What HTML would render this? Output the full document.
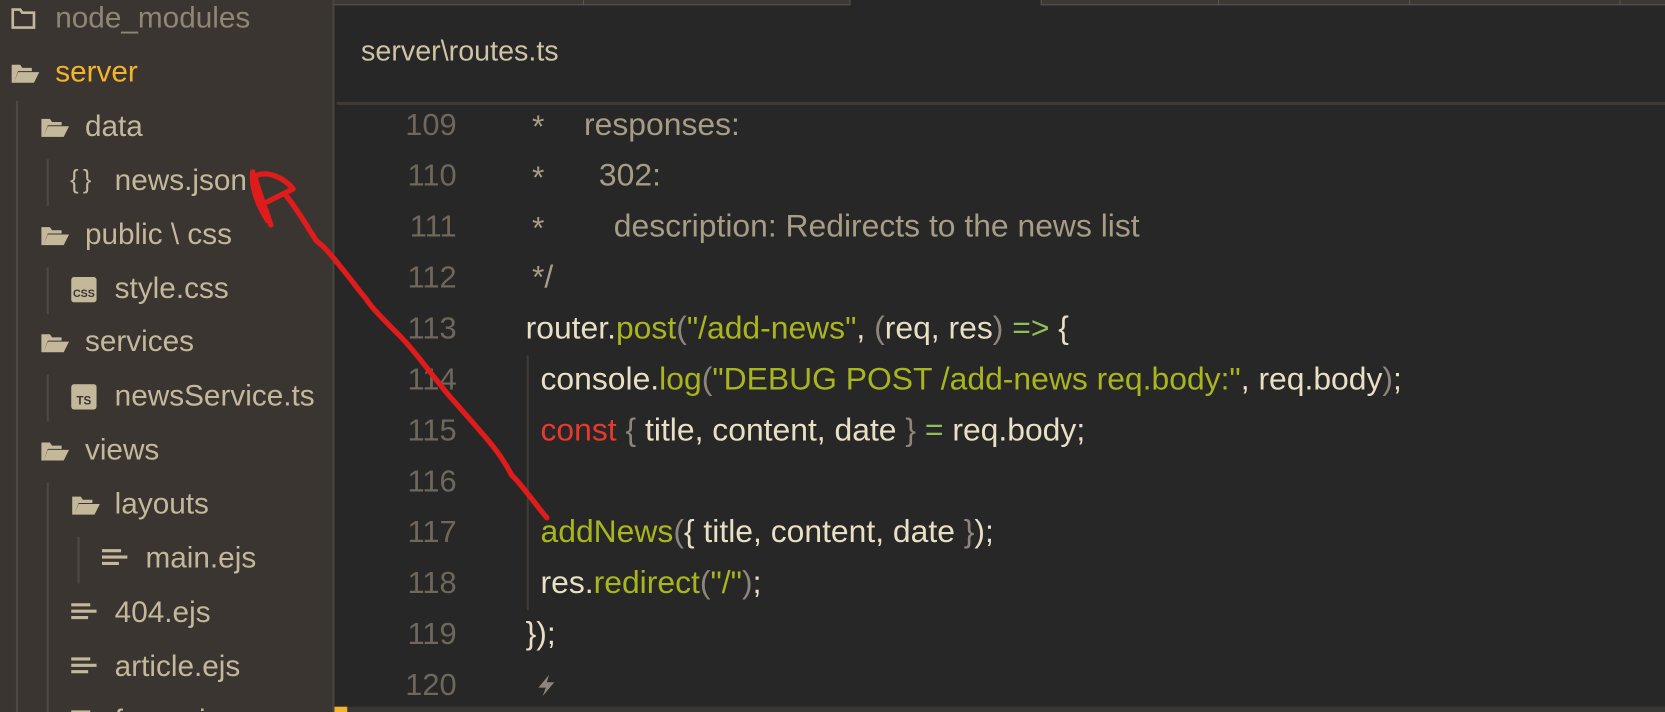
<!DOCTYPE html>
<html><head><meta charset="utf-8"><style>
*{margin:0;padding:0;box-sizing:border-box}
body{width:1665px;height:712px;overflow:hidden;background:#272727;font-family:"Liberation Sans",sans-serif}
#w{position:absolute;left:0;top:0;width:1568px;height:671px;overflow:hidden;transform:scale(1.0619,1.0611);transform-origin:0 0;background:#272727}
#side{position:absolute;left:0;top:0;width:315px;height:671px;background:#3a3531;border-right:2px solid #4a443e}
.r{position:absolute;font-size:28px;color:#c4b89b;white-space:nowrap;line-height:30px}
.ic{position:absolute}
.g{position:absolute;width:2px;background:#4e4842}
#tabs{position:absolute;left:315px;top:0;width:1253px;height:5px;background:#3d3834;border-bottom:1px solid #5a534b}
.ts{position:absolute;top:0;width:1px;height:5px;background:#5a534b}
#hdr{position:absolute;left:340px;top:33px;font-size:27px;color:#cfc3a6}
#hl{position:absolute;left:317px;top:96px;width:1251px;height:3px;background:#3e3934}
.ln{position:absolute;left:330px;width:100px;text-align:right;font-size:29px;color:#6f675c;line-height:32px}
.c{position:absolute;font-size:30px;color:#e9dfc2;white-space:nowrap;line-height:32px}
.y{color:#a9b51e}.p{color:#8d857b}.k{color:#e8392c}.m{color:#a79c84}.o{color:#8fbf5a}
</style></head><body><div id="w">
<div id="side">
<div class="g" style="left:15px;top:95px;height:576px"></div>
<div class="g" style="left:44px;top:150px;height:44px"></div>
<div class="g" style="left:44px;top:252px;height:44px"></div>
<div class="g" style="left:44px;top:353px;height:44px"></div>
<div class="g" style="left:44px;top:455px;height:216px"></div>
<div class="g" style="left:73px;top:506px;height:44px"></div>
<svg class="ic" style="left:10px;top:6px" width="24" height="22"><path d="M2 3h7l2 3h11v14H2z" fill="none" stroke="#c4b89b" stroke-width="2.5"/></svg>
<div class="r" style="left:52px;top:2px;color:#8f8676">node_modules</div>
<svg class="ic" style="left:10px;top:57px" width="28" height="24"><path d="M1 4h8l2 3h9v3H7L3 21H1z M7 11h20l-5 10H3z" fill="#c4b89b"/></svg>
<div class="r" style="left:52px;top:53px;color:#f2b42a">server</div>
<svg class="ic" style="left:38px;top:108px" width="28" height="24"><path d="M1 4h8l2 3h9v3H7L3 21H1z M7 11h20l-5 10H3z" fill="#c4b89b"/></svg>
<div class="r" style="left:80px;top:104px">data</div>
<div class="r" style="left:66px;top:155px;font-size:24px;letter-spacing:4px">{}</div>
<div class="r" style="left:108px;top:155px">news.json</div>
<svg class="ic" style="left:38px;top:210px" width="28" height="24"><path d="M1 4h8l2 3h9v3H7L3 21H1z M7 11h20l-5 10H3z" fill="#c4b89b"/></svg>
<div class="r" style="left:80px;top:206px">public \ css</div>
<svg class="ic" style="left:67px;top:261px" width="24" height="24"><rect x="0" y="0" width="24" height="24" rx="3" fill="#c4b89b"/><text x="12" y="19" font-size="10" font-weight="bold" text-anchor="middle" fill="#3a3531" font-family="Liberation Sans">CSS</text></svg>
<div class="r" style="left:108px;top:257px">style.css</div>
<svg class="ic" style="left:38px;top:311px" width="28" height="24"><path d="M1 4h8l2 3h9v3H7L3 21H1z M7 11h20l-5 10H3z" fill="#c4b89b"/></svg>
<div class="r" style="left:80px;top:307px">services</div>
<svg class="ic" style="left:67px;top:362px" width="24" height="24"><rect x="0" y="0" width="24" height="24" rx="3" fill="#c4b89b"/><text x="12" y="19" font-size="11" font-weight="bold" text-anchor="middle" fill="#3a3531" font-family="Liberation Sans">TS</text></svg>
<div class="r" style="left:108px;top:358px">newsService.ts</div>
<svg class="ic" style="left:38px;top:413px" width="28" height="24"><path d="M1 4h8l2 3h9v3H7L3 21H1z M7 11h20l-5 10H3z" fill="#c4b89b"/></svg>
<div class="r" style="left:80px;top:409px">views</div>
<svg class="ic" style="left:67px;top:464px" width="28" height="24"><path d="M1 4h8l2 3h9v3H7L3 21H1z M7 11h20l-5 10H3z" fill="#c4b89b"/></svg>
<div class="r" style="left:108px;top:460px">layouts</div>
<svg class="ic" style="left:96px;top:517px" width="24" height="18"><path d="M0 2h18M0 8h24M0 14h16" stroke="#c4b89b" stroke-width="3"/></svg>
<div class="r" style="left:137px;top:511px">main.ejs</div>
<svg class="ic" style="left:67px;top:568px" width="24" height="18"><path d="M0 2h18M0 8h24M0 14h16" stroke="#c4b89b" stroke-width="3"/></svg>
<div class="r" style="left:108px;top:562px">404.ejs</div>
<svg class="ic" style="left:67px;top:619px" width="24" height="18"><path d="M0 2h18M0 8h24M0 14h16" stroke="#c4b89b" stroke-width="3"/></svg>
<div class="r" style="left:108px;top:613px">article.ejs</div>
<svg class="ic" style="left:67px;top:669px" width="24" height="18"><path d="M0 2h18" stroke="#c4b89b" stroke-width="3"/></svg>
<div class="r" style="left:108px;top:664px">form.ejs</div>
</div>
<div id="tabs"></div>
<div style="position:absolute;left:800px;top:0;width:180px;height:6px;background:#272727"></div>
<div class="ts" style="left:549px"></div><div class="ts" style="left:800px"></div><div class="ts" style="left:980px"></div><div class="ts" style="left:1147px"></div><div class="ts" style="left:1327px"></div><div class="ts" style="left:1525px"></div>
<div id="hdr">server\routes.ts</div>
<div id="hl"></div>
<div class="ln" style="top:102px">109</div>
<div class="ln" style="top:150px">110</div>
<div class="ln" style="top:198px">111</div>
<div class="ln" style="top:246px">112</div>
<div class="ln" style="top:294px">113</div>
<div class="ln" style="top:342px">114</div>
<div class="ln" style="top:390px">115</div>
<div class="ln" style="top:438px">116</div>
<div class="ln" style="top:486px">117</div>
<div class="ln" style="top:534px">118</div>
<div class="ln" style="top:582px">119</div>
<div class="ln" style="top:630px">120</div>
<div class="c m" style="left:501px;top:104px">*</div><div class="c m" style="left:550px;top:102px">responses:</div>
<div class="c m" style="left:501px;top:152px">*</div><div class="c m" style="left:564px;top:150px">302:</div>
<div class="c m" style="left:501px;top:200px">*</div><div class="c m" style="left:578px;top:198px">description: Redirects to the news list</div>
<div class="c m" style="left:501px;top:246px">*/</div>
<div class="c" style="left:495px;top:294px">router.<span class="y">post</span><span class="p">(</span><span class="y">"/add-news"</span>, <span class="p">(</span>req, res<span class="p">)</span> <span class="o">=&gt;</span> {</div>
<div style="position:absolute;left:496px;top:335px;width:2px;height:240px;background:#3f3b37"></div>
<div class="c" style="left:509px;top:342px">console.<span class="y">log</span><span class="p">(</span><span class="y">"DEBUG POST /add-news req.body:"</span>, req.body<span class="p">)</span>;</div>
<div class="c" style="left:509px;top:390px"><span class="k">const</span> <span class="p">{</span> title, content, date <span class="p">}</span> <span class="o">=</span> req.body;</div>
<div class="c" style="left:509px;top:486px"><span class="y">addNews</span><span class="p">(</span>{ title, content, date <span class="p">}</span>);</div>
<div class="c" style="left:509px;top:534px">res.<span class="y">redirect</span><span class="p">(</span><span class="y">"/"</span><span class="p">)</span>;</div>
<div class="c" style="left:495px;top:582px">});</div>
<svg style="position:absolute;left:505px;top:635px" width="20" height="22"><path d="M12 1L2 13h7l-3 8 11-13h-7z" fill="#8d857b"/></svg>
<div style="position:absolute;left:317px;top:666px;width:1251px;height:5px;background:#3a3632"></div>
<div style="position:absolute;left:315px;top:666px;width:12px;height:5px;background:#f2b42a"></div>
<svg style="position:absolute;left:0;top:0" width="1568" height="671"><path d="M515 488 C500 470 490 455 482 448 C470 425 460 415 423 373 C400 345 390 330 377 317 C360 300 350 290 345 282 C335 270 328 260 322 253 C312 240 305 232 298 227 C290 215 282 200 270 185 M255 212 C250 195 243 180 240 166 C252 160 268 168 276 178 C268 182 260 186 252 190 M238 162 C236 178 244 195 252 208" fill="none" stroke="#e01b1b" stroke-width="5" stroke-linecap="round" stroke-linejoin="round"/></svg>
</div></body></html>
